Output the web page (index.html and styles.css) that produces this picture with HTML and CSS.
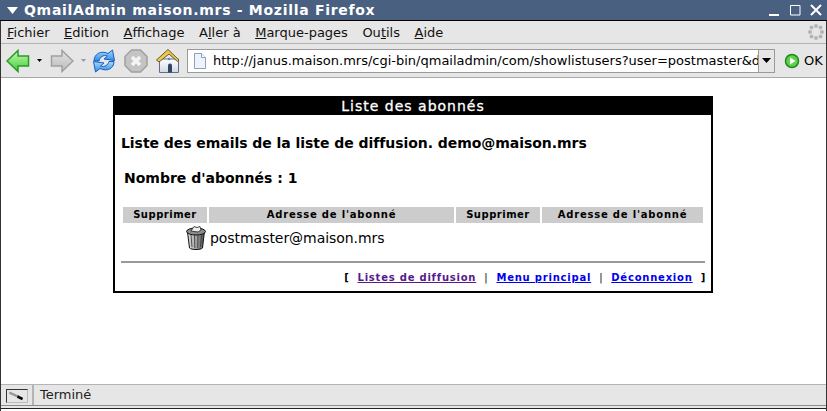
FILE: index.html
```html
<!DOCTYPE html>
<html lang="fr">
<head>
  <meta charset="UTF-8" />
  <title>QmailAdmin maison.mrs - Mozilla Firefox</title>
  <link rel="stylesheet" href="styles.css">
</head>
<body>
  <div class="window">
    <div class="titlebar">
      <svg class="win-menu" width="11" height="7" viewBox="0 0 11 7"><path d="M0 0h11L5.500 7z" fill="#fff"/></svg>
      <span class="title">QmailAdmin maison.mrs - Mozilla Firefox</span>
      <div class="win-buttons">
        <svg width="12" height="12" viewBox="0 0 12 12"><path d="M1 10h10v2H1z" fill="#fff"/></svg>
        <svg width="12" height="12" viewBox="0 0 12 12"><path d="M1.500 1.500h9.500v9.500H1.500z" fill="none" stroke="#fff"/></svg>
        <svg width="12" height="12" viewBox="0 0 12 12"><path d="M1 1l10 10M11 1L1 11" stroke="#fff" stroke-width="2"/></svg>
      </div>
    </div>

    <div class="menubar">
      <span><u>F</u>ichier</span>
      <span><u>E</u>dition</span>
      <span><u>A</u>ffichage</span>
      <span>A<u>l</u>ler à</span>
      <span><u>M</u>arque-pages</span>
      <span>Ou<u>t</u>ils</span>
      <span><u>A</u>ide</span>
      <svg class="throbber" width="16" height="16" viewBox="0 0 16 16" fill="#b4b4b4">
        <circle cx="8" cy="2" r="2"/><circle cx="12.500" cy="3.500" r="2"/><circle cx="14" cy="8" r="2"/><circle cx="12.500" cy="12.500" r="2"/>
        <circle cx="8" cy="14" r="2"/><circle cx="3.500" cy="12.500" r="2"/><circle cx="2" cy="8" r="2"/><circle cx="3.500" cy="3.500" r="2"/>
      </svg>
    </div>

    <div class="toolbar">
      <svg class="tb-back" width="24" height="24" viewBox="0 0 24 24">
        <defs><linearGradient id="backFill" x1="0" y1="0" x2="0" y2="1"><stop offset="0" stop-color="#c8f8b0"/><stop offset="1" stop-color="#3fcf3a"/></linearGradient></defs>
        <path d="M1 12L12 1.500V7h10.500v10H12v5.500z" fill="url(#backFill)" stroke="#2a9a28" stroke-width="1.500"/>
      </svg>
      <svg class="tb-drop" width="5" height="3" viewBox="0 0 5 3"><path d="M0 0h5L2.500 3z" fill="#000"/></svg>
      <svg class="tb-forward" width="24" height="24" viewBox="0 0 24 24">
        <defs><linearGradient id="fwdFill" x1="0" y1="0" x2="0" y2="1"><stop offset="0" stop-color="#e2e2e2"/><stop offset="1" stop-color="#bcbcbc"/></linearGradient></defs>
        <path d="M23 12L12 1.500V7H1.500v10H12v5.500z" fill="url(#fwdFill)" stroke="#a0a0a0" stroke-width="1.500"/>
      </svg>
      <svg class="tb-drop tb-drop-off" width="5" height="3" viewBox="0 0 5 3"><path d="M0 0h5L2.500 3z" fill="#999"/></svg>
      <svg class="tb-reload" width="24" height="24" viewBox="0 0 24 24">
        <defs><linearGradient id="reloadFill" x1="0" y1="0" x2="0" y2="1"><stop offset="0" stop-color="#a4dcfb"/><stop offset="1" stop-color="#2b8cec"/></linearGradient></defs>
        <path d="M2 12C2 5 9 1 16 4.500L20.500 1l2 10.500L12 10l3.500-3C11 5.500 8 8 7 12z" fill="url(#reloadFill)" stroke="#1c5cc0"/>
        <path d="M22 12.500c0 7-7 10.500-14 7L3.500 23 1.500 12.500 12 14 8.500 17c4.500 1.500 7.500-1 8.500-4.500z" fill="url(#reloadFill)" stroke="#1c5cc0"/>
      </svg>
      <svg class="tb-stop" width="24" height="24" viewBox="0 0 24 24">
        <path d="M7.500 1h9L23 7.500v9L16.500 23h-9L1 16.500v-9z" fill="#c4c4c4" stroke="#a0a0a0" stroke-width="1.500"/>
        <path d="M8 8l8 8M16 8l-8 8" stroke="#f4f4f4" stroke-width="3.500"/>
      </svg>
      <svg class="tb-home" width="24" height="26" viewBox="0 0 24 26">
        <defs><linearGradient id="wallFill" x1="0" y1="0" x2="0" y2="1"><stop offset="0" stop-color="#ffffff"/><stop offset="1" stop-color="#cfd8e6"/></linearGradient></defs>
        <path d="M3.500 11h19v13.500h-19z" fill="url(#wallFill)" stroke="#5f6f88"/>
        <path d="M.5 12L12 1.500l11 10.500-1.500 1.500L13 6 3 14z" fill="#eec84e" stroke="#6a5826"/>
        <path d="M12 24.500v-7a2 2 0 0 1 4 0v7z" fill="#33465f"/>
        <circle cx="13" cy="11" r="1.200" fill="#5f86c4"/>
      </svg>
      <div class="urlbar">
        <div class="urlfield">
          <svg width="13" height="16" viewBox="0 0 13 16"><path d="M1.500.5h7l4 4v11h-11z" fill="#eef2fb" stroke="#8f9fc0"/><path d="M8.500.5v4h4" fill="#fff" stroke="#8f9fc0"/></svg>
          <span class="url">http://janus.maison.mrs/cgi-bin/qmailadmin/com/showlistusers?user=postmaster&amp;do</span>
        </div>
        <div class="urldrop"><svg width="9" height="5" viewBox="0 0 9 5"><path d="M0 0h9L4.500 5z" fill="#000"/></svg></div>
      </div>
      <svg class="tb-go" width="16" height="16" viewBox="0 0 16 16"><circle cx="8" cy="8" r="6.500" fill="#62d04a" stroke="#1f8a1f" stroke-width="1.500"/><path d="M6 4.500L11.500 8 6 11.500z" fill="#fff"/></svg>
      <span class="go-label">OK</span>
    </div>

    <main class="page">
      <section class="card">
        <h1 class="card-title">Liste des abonnés</h1>
        <p class="list-name">Liste des emails de la liste de diffusion. demo@maison.mrs</p>
        <p class="count">Nombre d'abonnés : 1</p>
        <table class="subscribers">
          <tr>
            <th class="col-del">Supprimer</th>
            <th class="col-addr">Adresse de l'abonné</th>
            <th class="col-del">Supprimer</th>
            <th class="col-addr2">Adresse de l'abonné</th>
          </tr>
          <tr>
            <td class="del-cell">
              <svg width="22" height="25" viewBox="0 0 22 25">
                <defs><linearGradient id="binFill" x1="0" y1="0" x2="1" y2="0"><stop offset="0" stop-color="#e4e4e4"/><stop offset=".5" stop-color="#a4a4a4"/><stop offset="1" stop-color="#505050"/></linearGradient></defs>
                <path d="M2.500 7l2 16c2 2 11 2 13 0l2-17z" fill="url(#binFill)" stroke="#111"/>
                <path d="M6 10l1 12M9.500 10l.3 13M13 10l-.3 13M16.500 10l-1 12" stroke="#333" stroke-width=".8"/>
                <ellipse cx="11" cy="6.500" rx="9.500" ry="3.500" fill="#8a8a8a" stroke="#111"/>
                <path d="M6 6l3-4.500 3 1 3-1 1 3.500-3 2z" fill="#eee" stroke="#222" stroke-width=".8"/>
              </svg>
            </td>
            <td class="addr-cell" colspan="3">postmaster@maison.mrs</td>
          </tr>
        </table>
        <hr class="rule">
        <nav class="links">
          <span>[</span>
          <a class="visited" href="#">Listes de diffusion</a>
          <span class="sep">|</span>
          <a href="#">Menu principal</a>
          <span class="sep">|</span>
          <a href="#">Déconnexion</a>
          <span>]</span>
        </nav>
      </section>
    </main>

    <div class="statusbar">
      <div class="status-icon">
        <svg width="22" height="14" viewBox="0 0 22 14"><path d="M2 3l11 5" stroke="#999" stroke-width="3"/><path d="M12 6l6 3-1 3-6-3z" fill="#000"/></svg>
      </div>
      <div class="status-text">Terminé</div>
    </div>
    <div class="bottom-edge"></div>
  </div>
</body>
</html>
```

FILE: styles.css
```css
* {
  box-sizing: border-box;
}
html, body {
  margin: 0;
  padding: 0;
  height: 100%;
  overflow: hidden;
}
body {
  font-family: "DejaVu Sans", sans-serif;
  font-size: 13px;
  color: #000;
  background: #fff;
}
.window {
  width: 827px;
  height: 411px;
  display: flex;
  flex-direction: column;
  border-left: 1px solid #333;
  border-right: 1px solid #333;
}

/* title bar */
.titlebar {
  height: 21px;
  flex: none;
  margin: 0 -1px;
  display: flex;
  align-items: center;
  padding: 0 5px 0 7px;
  background: #4a6081;
  border-bottom: 1px solid #000;
  color: #fff;
}
.win-menu {
  margin-right: 6px;
}
.title {
  font-size: 14px;
  font-weight: bold;
  letter-spacing: 0.7px;
}
.win-buttons {
  margin-left: auto;
  display: flex;
  gap: 9px;
}

/* menus */
.menubar {
  height: 23px;
  flex: none;
  display: flex;
  align-items: center;
  padding: 0 0 0 6px;
  gap: 14.5px;
  background: #e6e6e6;
  border-bottom: 1px solid #b4b4b4;
  color: #111;
}
.throbber {
  margin-left: auto;
  margin-right: 2px;
}

/* navigation toolbar */
.toolbar {
  height: 34px;
  flex: none;
  display: flex;
  align-items: center;
  padding: 0 0 0 5px;
  background: #e6e6e6;
  border-bottom: 1px solid #a8a8a8;
}
.tb-drop {
  margin: 0 8px 0 7px;
}
.tb-drop-off {
  margin-right: 6px;
}
.tb-reload {
  margin-right: 8px;
}
.tb-stop {
  margin-right: 8px;
}
.tb-home {
  margin-right: 7px;
}
.urlbar {
  width: 588px;
  height: 24px;
  display: flex;
  border: 1px solid #9a9a9a;
  background: #fff;
}
.urlfield {
  flex: 1;
  min-width: 0;
  display: flex;
  align-items: center;
  gap: 7px;
  padding-left: 5px;
  overflow: hidden;
  white-space: nowrap;
  border-right: 1px solid #9a9a9a;
}
.urlfield svg {
  flex: none;
}
.urldrop {
  width: 15px;
  flex: none;
  display: flex;
  align-items: center;
  justify-content: center;
  background: #e6e6e6;
}
.tb-go {
  margin-left: 9px;
}
.go-label {
  margin-left: 4px;
}

/* page content */
.page {
  flex: 1;
  min-height: 0;
  background: #fff;
  padding-top: 18px;
}
.card {
  width: 600px;
  height: 197px;
  margin-left: 112px;
  border: 2px solid #000;
  padding: 0 6px;
}
.card-title {
  margin: 0 -6px;
  height: 17px;
  background: #000;
  color: #fff;
  font-size: 14px;
  font-weight: normal;
  letter-spacing: 1px;
  line-height: 17px;
  text-align: center;
  -webkit-text-stroke: 0.3px #fff;
}
.list-name {
  margin: 0;
  padding-top: 20px;
  font-size: 14px;
  font-weight: bold;
  letter-spacing: -0.05px;
  line-height: 17px;
  white-space: nowrap;
}
.count {
  margin: 0;
  padding: 18px 0 0 3px;
  font-size: 14px;
  font-weight: bold;
  line-height: 17px;
}
.subscribers {
  margin: 18px 0 0 0;
  width: 584px;
  border-spacing: 2px;
  border-collapse: separate;
  table-layout: fixed;
}
.subscribers th {
  height: 16px;
  padding: 0 0 2px;
  background: #cccccc;
  font-size: 10px;
  letter-spacing: 0.5px;
  text-align: center;
}
.col-del {
  width: 84px;
}
.col-addr {
  width: 245px;
}
.col-addr2 {
  width: 161px;
}
.subscribers .col-addr, .subscribers .col-addr2 {
  letter-spacing: 0.8px;
}
.subscribers td {
  padding: 0;
}
.del-cell {
  text-align: right;
  line-height: 0;
}
.subscribers .addr-cell {
  padding-left: 1px;
  font-size: 14px;
  letter-spacing: -0.05px;
  vertical-align: middle;
}
.rule {
  margin: 9px 0 0 0;
  width: 584px;
  height: 2px;
  border: 0;
  background: #999;
}
.links {
  margin: 9px -1px 0 0;
  display: flex;
  justify-content: flex-end;
  gap: 8px;
  font-size: 10px;
  font-weight: bold;
  letter-spacing: 0.78px;
}
.links a {
  color: #0000ee;
}
.links a.visited {
  color: #551a8b;
}
.sep {
  font-weight: normal;
  color: #000;
}

/* status bar */
.statusbar {
  height: 22px;
  flex: none;
  display: flex;
  background: #e6e6e6;
  border-top: 1px solid #b4b4b4;
  border-bottom: 1px solid #8c8c8c;
  color: #222;
}
.status-icon {
  width: 33px;
  padding: 4px 5px 2px 5px;
  border-right: 2px solid #b4b4b4;
}
.status-icon svg {
  display: block;
  border: 1px solid;
  border-color: #333 #bbb #bbb #333;
}
.status-text {
  padding-left: 6px;
  line-height: 20px;
}
.bottom-edge {
  height: 5px;
  flex: none;
  background: #e6e6e6;
  border-bottom: 2px solid #fff;
  box-shadow: inset 0 -1px 0 #222;
}
```
